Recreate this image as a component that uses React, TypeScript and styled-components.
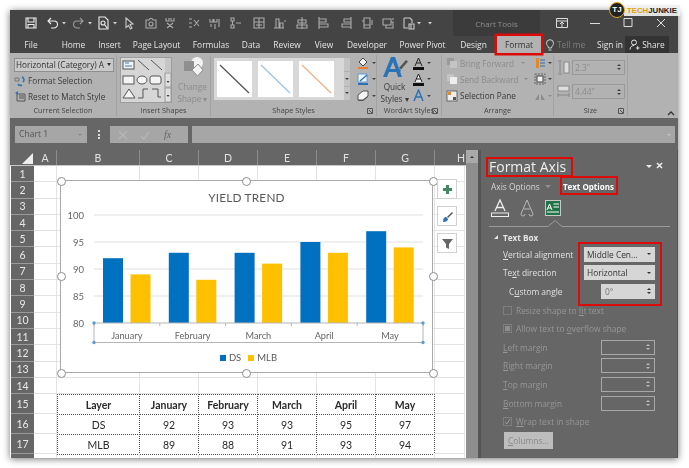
import React from 'react'
import styled, { createGlobalStyle } from 'styled-components'

const Global = createGlobalStyle`
  html, body { margin: 0; padding: 0; background: #fff; }
  body { font-family: "Open Sans", "Liberation Sans", sans-serif; width: 689px; height: 468px; overflow: hidden; }
`

const Page = styled.div`
  position: relative;
  width: 689px;
  height: 468px;
  padding: 10px 11px 10px 10px;
  box-sizing: border-box;
`
const Window = styled.div`
  width: 668px;
  height: 448px;
  display: flex;
  flex-direction: column;
  background: #666;
  box-shadow: 0 1px 7px rgba(0, 0, 0, 0.55);
  filter: blur(0.35px);
  overflow: hidden;
  position: relative;
`

/* title bar */
const TitleBar = styled.div`
  height: 26px;
  display: flex;
  background: #444;
`
const Qat = styled.div`
  flex: 1;
  display: flex;
  align-items: center;
  padding-left: 14px;
`
const QatSlot = styled.span<{ $ml: number; $w?: number }>`
  width: ${p => p.$w ?? 14}px;
  height: 14px;
  margin-left: ${p => p.$ml}px;
  display: block;
  svg { display: block; }
`
const ChartTools = styled.div`
  width: 87px;
  background: #3b3b3b;
  color: #8e8e8e;
  font-size: 8px;
  display: flex;
  align-items: center;
  justify-content: center;
`
const WinControls = styled.div`
  width: 138px;
  display: flex;
  align-items: center;
  padding-left: 15px;
  gap: 19px;
  box-sizing: border-box;
  svg { display: block; }
`

/* tabs */
const TabRow = styled.div`
  height: 17px;
  display: flex;
  align-items: stretch;
  background: #444;
`
const Tab = styled.div<{ $w: number; $active?: boolean }>`
  width: ${p => p.$w}px;
  display: flex;
  align-items: center;
  justify-content: center;
  font-size: 8.4px;
  white-space: nowrap;
  color: ${p => (p.$active ? '#333' : '#e4e4e4')};
  background: ${p => (p.$active ? '#b2b2b2' : 'transparent')};
  margin-left: ${p => (p.$active ? 4 : 0)}px;
  box-shadow: ${p => (p.$active ? '0 0 0 2.5px #dd0a0a' : 'none')};
  position: relative;
  z-index: ${p => (p.$active ? 2 : 0)};
`
const TellMe = styled.div`
  width: 50px;
  margin-left: 4px;
  display: flex;
  align-items: center;
  gap: 2px;
  font-size: 8.4px;
  color: #7d7d7d;
  white-space: nowrap;
  overflow: hidden;
`
const ShareButton = styled.div`
  width: 44px;
  margin: 0 9px 0 auto;
  background: #333;
  color: #e4e4e4;
  font-size: 8.4px;
  display: flex;
  align-items: center;
  justify-content: center;
  gap: 2px;
`

/* ribbon */
const Ribbon = styled.div`
  height: 65px;
  display: flex;
  background: #b2b2b2;
  color: #3a3a3a;
  font-size: 8.2px;
`
const Group = styled.div<{ $w?: number }>`
  ${p => (p.$w ? `width: ${p.$w}px;` : 'flex: 1;')}
  box-sizing: border-box;
  display: flex;
  flex-direction: column;
  position: relative;
  &:not(:last-child) { border-right: 1px solid #a2a2a2; margin: 2px 0; }
`
const GroupBody = styled.div`
  height: 51px;
  display: flex;
`
const GroupLabel = styled.div`
  text-align: center;
  font-size: 7.3px;
  color: #444;
  line-height: 11px;
`
const Launcher = styled.svg`
  position: absolute;
  right: 3px;
  bottom: 2px;
`
const Stack = styled.div<{ $pl?: number; $w?: number }>`
  display: flex;
  flex-direction: column;
  justify-content: space-around;
  padding: 0 0 1px ${p => p.$pl ?? 0}px;
  ${p => (p.$w ? `width: ${p.$w}px; box-sizing: border-box;` : '')}
`
const Combo = styled.div`
  margin-top: 1px;
  width: 100px;
  height: 14px;
  box-sizing: border-box;
  background: #c9c9c9;
  border: 1px solid #8f8f8f;
  font-size: 8.2px;
  line-height: 12px;
  padding-left: 1px;
  white-space: nowrap;
  overflow: hidden;
  position: relative;
  color: #333;
`
const ComboCaret = styled.i`
  position: absolute;
  right: 2px;
  top: 4px;
  border: 2.5px solid transparent;
  border-top: 3px solid #333;
`
const CmdRow = styled.div<{ $off?: boolean }>`
  display: flex;
  align-items: center;
  gap: 2px;
  font-size: 8.2px;
  white-space: nowrap;
  color: ${p => (p.$off ? '#8b8b8b' : '#3a3a3a')};
  svg { display: block; flex: none; }
`
const BigButton = styled.div<{ $off?: boolean; $w: number; $ml?: number }>`
  width: ${p => p.$w}px;
  margin-left: ${p => p.$ml ?? 0}px;
  display: flex;
  flex-direction: column;
  align-items: center;
  font-size: 8.2px;
  line-height: 12px;
  color: ${p => (p.$off ? '#8b8b8b' : '#3a3a3a')};
  svg { display: block; margin-bottom: 2px; }
`
const ShapeGallery = styled.svg`
  margin: 2px 0 0 3px;
  display: block;
`
const StyleGallery = styled.div`
  margin: 3px 0 0 3px;
  width: 131px;
  height: 42px;
  background: #d8d8d8;
  display: flex;
  align-items: center;
  padding-left: 3px;
  gap: 6px;
  box-sizing: border-box;
  position: relative;
`
const Tile = styled.div`
  width: 35px;
  height: 36px;
  background: #fff;
  svg { display: block; }
`
const GalleryScroll = styled.div`
  margin-top: 3px;
  width: 6px;
  height: 42px;
  display: flex;
  flex-direction: column;
  gap: 1px;
`
const ScrollCell = styled.div`
  flex: 1;
  background: #c4c4c4;
  display: flex;
  align-items: center;
  justify-content: center;
`
const Caret = styled.i<{ $c?: string; $ml?: number }>`
  display: block;
  flex: none;
  width: 0;
  height: 0;
  margin-left: ${p => p.$ml ?? 0}px;
  border-left: 2.2px solid transparent;
  border-right: 2.2px solid transparent;
  border-top: 2.6px solid ${p => p.$c ?? '#444'};
`
const SizeInput = styled.div`
  width: 53px;
  height: 15px;
  box-sizing: border-box;
  border: 1px solid #999;
  color: #8b8b8b;
  font-size: 8.4px;
  line-height: 13px;
  padding-left: 2px;
  display: flex;
  align-items: center;
  justify-content: space-between;
  padding-right: 3px;
`
const Spin = styled.div`
  display: flex;
  flex-direction: column;
  gap: 2px;
  align-items: center;
`
const UpCaret = styled.i<{ $c?: string }>`
  display: block;
  width: 0;
  height: 0;
  border-left: 2px solid transparent;
  border-right: 2px solid transparent;
  border-bottom: 2.5px solid ${p => p.$c ?? '#444'};
`
const DownCaret = styled(UpCaret)`
  transform: rotate(180deg);
`

/* formula bar */
const FormulaBar = styled.div`
  height: 32px;
  background: #666;
  display: flex;
  padding: 8px 3px 0 5px;
  box-sizing: border-box;
`
const NameBox = styled.div`
  width: 72px;
  height: 17px;
  background: #a6a6a6;
  color: #555;
  font-size: 8.6px;
  line-height: 17px;
  padding-left: 4px;
  box-sizing: border-box;
  display: flex;
  align-items: center;
  justify-content: space-between;
  padding-right: 5px;
`
const Dots = styled.div`
  width: 23px;
  display: flex;
  flex-direction: column;
  gap: 1.5px;
  align-items: center;
  justify-content: center;
  height: 17px;
  i { width: 2px; height: 2px; background: #ddd; display: block; }
`
const FxButtons = styled.div`
  width: 78px;
  height: 17px;
  background: #a6a6a6;
  display: flex;
  align-items: center;
  padding-left: 8px;
  gap: 12px;
  box-sizing: border-box;
`
const FxText = styled.span`
  font-family: "Liberation Serif", serif;
  font-style: italic;
  font-size: 10px;
  color: #666;
  margin-left: 2px;
`
const FormulaInput = styled.div`
  margin-left: 4px;
  flex: 1;
  height: 17px;
  background: #a6a6a6;
  display: flex;
  align-items: center;
  justify-content: flex-end;
  padding-right: 4px;
`

/* sheet */
const Workspace = styled.div`
  flex: 1;
  display: flex;
  min-height: 0;
  background: #555;
`
const Sheet = styled.div`
  width: 456px;
  display: flex;
  flex-direction: column;
  background: #fff;
`
const ColHeaders = styled.div`
  height: 15px;
  display: flex;
  background: #666;
  border-bottom: 1px solid #c8c8c8;
  box-sizing: content-box;
  font-family: Lato, "Liberation Sans", sans-serif;
  color: #e2e2e2;
  font-size: 10.5px;
  padding-left: 1px;
`
const Corner = styled.div`
  width: 23px;
  position: relative;
  &::after {
    content: "";
    position: absolute;
    right: 1px;
    bottom: 1px;
    border-left: 11px solid transparent;
    border-bottom: 11px solid #eee;
  }
`
const ColHead = styled.div<{ $w: number }>`
  width: ${p => p.$w}px;
  display: flex;
  align-items: center;
  justify-content: center;
  box-sizing: border-box;
  border-right: 1px solid #8c8c8c;
  &:last-child { border-right: none; justify-content: flex-end; overflow: hidden; }
`
const SheetBody = styled.div`
  flex: 1;
  display: flex;
  min-height: 0;
  overflow: hidden;
  padding-left: 1px;
`
const RowHeads = styled.div`
  width: 23px;
  flex: none;
  background: #666;
  color: #e8e8e8;
  font-family: Lato, "Liberation Sans", sans-serif;
  font-size: 10.5px;
`
const RowHead = styled.div<{ $h: number }>`
  height: ${p => p.$h}px;
  box-sizing: border-box;
  border-bottom: 1px solid #9a9a9a;
  display: flex;
  align-items: center;
  justify-content: center;
`
const Cells = styled.div`
  position: relative;
  flex: 1;
`
const CellRow = styled.div<{ $h: number }>`
  height: ${p => p.$h}px;
  display: flex;
`
const Cell = styled.div<{ $w: number; $table?: boolean; $head?: boolean }>`
  width: ${p => p.$w}px;
  flex: none;
  box-sizing: border-box;
  border-right: ${p => (p.$table ? '1px dotted #555' : '1px solid #e3e3e3')};
  border-bottom: ${p => (p.$table ? '1px dotted #555' : '1px solid #e3e3e3')};
  ${p => (p.$table ? 'border-top: 1px dotted #555; margin-bottom: -1px;' : '')}
  display: flex;
  align-items: center;
  justify-content: center;
  font-family: Lato, "Liberation Sans", sans-serif;
  font-size: 10.5px;
  font-weight: ${p => (p.$head ? 700 : 400)};
  color: #2a2a2a;
`
const TableFirst = styled(Cell)`
  border-left: 1px dotted #555;
`

/* chart */
const ChartFrame = styled.div`
  position: absolute;
  left: 26px;
  top: 14px;
  width: 373px;
  height: 193px;
  box-sizing: border-box;
  background: #fff;
  border: 1.3px solid #a9a9a9;
  display: flex;
  flex-direction: column;
  font-family: Lato, "Liberation Sans", sans-serif;
`
const ChartTitle = styled.div`
  height: 17px;
  padding-top: 8px;
  box-sizing: content-box;
  text-align: center;
  font-size: 11.8px;
  line-height: 18px;
  color: #595959;
  letter-spacing: 0.2px;
`
const Plot = styled.svg`
  display: block;
  font-family: Lato, "Liberation Sans", sans-serif;
`
const Legend = styled.div`
  display: flex;
  justify-content: center;
  align-items: center;
  gap: 3px;
  font-size: 9.5px;
  color: #595959;
  margin-top: 4px;
`
const LegendKey = styled.i<{ $c: string }>`
  width: 6px;
  height: 6px;
  background: ${p => p.$c};
  display: block;
  margin-left: 4px;
`
const Handle = styled.i<{ $x: number; $y: number }>`
  position: absolute;
  left: ${p => p.$x}px;
  top: ${p => p.$y}px;
  width: 7px;
  height: 7px;
  margin: -4px 0 0 -4px;
  border-radius: 50%;
  background: #fff;
  border: 1.2px solid #8d8d8d;
`
const SideButtons = styled.div`
  position: absolute;
  left: 403px;
  top: 13px;
  display: flex;
  flex-direction: column;
  gap: 7px;
`
const SideButton = styled.div`
  width: 20px;
  height: 20px;
  box-sizing: border-box;
  background: #fff;
  border: 1px solid #d0d0d0;
  display: flex;
  align-items: center;
  justify-content: center;
  svg { display: block; }
`
const VScroll = styled.div`
  width: 12px;
  background: #8e8e8e;
`
const VScrollUp = styled.div`
  height: 13px;
  background: #a9a9a9;
  display: flex;
  align-items: center;
  justify-content: center;
`

/* format pane */
const Pane = styled.div`
  margin-left: 3px;
  flex: 1;
  background: #666;
  color: #e6e6e6;
  font-size: 8.4px;
  position: relative;
  display: flex;
  flex-direction: column;
  border-right: 1px solid #555;
`
const PaneHead = styled.div`
  display: flex;
  align-items: center;
  padding: 7px 11px 0 8px;
  height: 20px;
`
const PaneTitle = styled.div`
  font-size: 14px;
  line-height: 20px;
  color: #eee;
  flex: 1;
  white-space: nowrap;
`
const PaneTabs = styled.div`
  display: flex;
  align-items: center;
  height: 17px;
  padding-left: 10px;
  margin-top: 1px;
`
const PaneTab = styled.div<{ $on?: boolean }>`
  font-size: ${p => (p.$on ? 8 : 8.4)}px;
  font-weight: ${p => (p.$on ? 700 : 400)};
  color: ${p => (p.$on ? '#fff' : '#d4d4d4')};
  white-space: nowrap;
  margin-left: ${p => (p.$on ? 12 : 0)}px;
`
const PaneCaret = styled.i`
  display: block;
  margin-left: 5px;
  width: 0;
  height: 0;
  border-left: 3px solid transparent;
  border-right: 3px solid transparent;
  border-top: 3px solid #8f8f8f;
`
const PaneIcons = styled.div`
  display: flex;
  align-items: center;
  gap: 11px;
  height: 22px;
  padding: 2px 0 0 10px;
  svg { display: block; }
`
const Notch = styled.svg`
  display: block;
  margin: 1px 0 0 8px;
`
const SectionHead = styled.div`
  display: flex;
  align-items: center;
  gap: 5px;
  height: 16px;
  padding: 2px 0 0 13px;
  font-weight: 700;
  font-size: 8.2px;
`
const Tri = styled.i`
  width: 0;
  height: 0;
  border-left: 4px solid transparent;
  border-bottom: 4px solid #e6e6e6;
  display: block;
`
const FieldRow = styled.div<{ $off?: boolean; $indent?: number }>`
  height: 18.6px;
  display: flex;
  align-items: center;
  padding: 0 22px 0 ${p => p.$indent ?? 22}px;
  color: ${p => (p.$off ? '#979797' : '#e0e0e0')};
  font-size: 8.4px;
  white-space: nowrap;
`
const Select = styled.div`
  margin-left: auto;
  width: 71px;
  height: 15px;
  box-sizing: border-box;
  background: #d6d6d6;
  color: #333;
  font-size: 8.4px;
  padding: 0 4px 0 3px;
  display: flex;
  align-items: center;
  justify-content: space-between;
`
const SpinBox = styled.div<{ $off?: boolean }>`
  margin-left: auto;
  width: 54px;
  height: 15px;
  box-sizing: border-box;
  background: ${p => (p.$off ? 'transparent' : '#d6d6d6')};
  border: ${p => (p.$off ? '1px solid #a8a8a8' : 'none')};
  color: #777;
  font-size: 8.4px;
  padding: 0 4px;
  display: flex;
  align-items: center;
  justify-content: space-between;
`
const Check = styled.i<{ $dot?: boolean }>`
  width: 9px;
  height: 9px;
  margin-right: 4px;
  box-sizing: border-box;
  border: 1px solid #7e7e7e;
  background: #666;
  display: flex;
  align-items: center;
  justify-content: center;
  flex: none;
  &::after {
    content: "";
    display: ${p => (p.$dot ? 'block' : 'none')};
    width: 5px;
    height: 5px;
    background: #8f8f8f;
  }
  svg { display: block; }
`
const ColumnsButton = styled.div`
  margin: 1px 0 0 23px;
  width: 49px;
  height: 17px;
  background: #bdbdbd;
  color: #8a8a8a;
  font-size: 8.4px;
  line-height: 17px;
  text-align: center;
`
const RedBox = styled.div<{ $x: number; $y: number; $w: number; $h: number }>`
  position: absolute;
  left: ${p => p.$x}px;
  top: ${p => p.$y}px;
  width: ${p => p.$w}px;
  height: ${p => p.$h}px;
  box-sizing: border-box;
  border: 2.5px solid #dd0a0a;
  pointer-events: none;
`

/* logo */
const Logo = styled.div`
  position: absolute;
  left: 609px;
  top: 2px;
  display: flex;
  align-items: center;
`
const LogoMark = styled.div`
  width: 16px;
  height: 16px;
  border-radius: 50%;
  background: #222;
  border: 1.5px solid #e8a912;
  box-sizing: border-box;
  color: #fff;
  font-family: "Liberation Sans", sans-serif;
  font-size: 8px;
  font-weight: 700;
  line-height: 13px;
  text-align: center;
  position: relative;
  z-index: 1;
`
const LogoText = styled.div`
  margin-left: -1px;
  height: 11px;
  padding: 0 3px 0 3px;
  background: rgba(240, 240, 240, 0.92);
  font-family: "Liberation Sans", sans-serif;
  font-size: 7.8px;
  font-weight: 700;
  line-height: 11px;
  color: #222;
  span { color: #e0a010; }
`

const qatIcons: { ml: number; w?: number; d?: string; c?: string }[] = [
  { ml: 0, d: 'M2 2h10v10H2zM4 2v4h6V2M4 12V8.5h6V12', c: '#eee' },
  { ml: 8, d: 'M5 2L2 5l3 3M2 5h6a3.5 3.5 0 0 1 0 7H5', c: '#eee' },
  { ml: 0, w: 8 },
  { ml: 3, d: 'M9 2l3 3-3 3M12 5H6a3.5 3.5 0 0 0 0 7h3', c: '#9a9a9a' },
  { ml: 1, w: 8 },
  { ml: 2, d: 'M3 1h6l3 3v9H3zM5 7a2 2 0 1 0 4 0 2 2 0 0 0-4 0M9 9l2 3', c: '#eee' },
  { ml: 1, w: 8 },
  { ml: 3, d: 'M4 2l7 6-3 .5 2 3.5-1.5 1-2-3.5L4 11.5z', c: '#c8c8c8' },
  { ml: 8, d: 'M2 4h3l1-1.5h2L9 4h3v8H2zM5 8a2 2 0 1 0 4 0 2 2 0 0 0-4 0', c: '#aaa' },
  { ml: 5, d: 'M3 2v3h3V2M8 2v3h3V2M4 7l6 5M10 7l-6 5', c: '#aaa' },
  { ml: 10, d: 'M2 3h3M2 7h3M2 11h3M7 4l5 6M12 4l-5 6', c: '#aaa' },
  { ml: 7, d: 'M2 3v3h3V3M6 3v3h3V3M7 8v5M3 8v3M11 3v8', c: '#aaa' },
  { ml: 6, d: 'M3 2h3v3H3zM3 9h3v3H3zM8 7h5M4.5 5v4', c: '#aaa' },
  { ml: 10, d: 'M2 2h10v10H2zM2 6h10M7 2v10M4 9h6', c: '#aaa' },
  { ml: 6, d: 'M2 12h10M4 3h3v9H4zM8 7h3v5H8zM12 5h2', c: '#aaa' },
  { ml: 9, d: 'M7 1v12M3 4h8v3H3zM2 9h10v3H2z', c: '#aaa' },
  { ml: 7, d: 'M3 1v12M3 3h7v3H3zM3 8h9v3H3z', c: '#aaa' },
  { ml: 10, d: 'M11 1v12M4 3h7v3H4zM2 8h9v3H2z', c: '#aaa' },
  { ml: 6, d: 'M4 2h6v7H4zM2 5h2v7h6v-3M12 4v5', c: '#aaa' },
  { ml: 7, d: 'M2 3h8v6H2zM5 9v3h7V6h-2M12 2v2', c: '#aaa' },
  { ml: 6, d: 'M3 2h6l2 2v3M3 2v10h4M8 8h5v5H8zM10 8v5', c: '#c8c8c8' },
  { ml: 0, w: 8 },
  { ml: 3, w: 8 },
]

const tabs: [string, number][] = [
  ['File', 42], ['Home', 43], ['Insert', 29], ['Page Layout', 65], ['Formulas', 44], ['Data', 36],
  ['Review', 36], ['View', 38], ['Developer', 48], ['Power Pivot', 63], ['Design', 39],
]

const colWidths = [23, 83, 59, 59, 59, 59, 59, 30]
const colNames = ['A', 'B', 'C', 'D', 'E', 'F', 'G', 'H']
const rowHeights = [...Array(14).fill(16.3), 20, 20, 20, 8] as number[]

const tableRows = [
  ['Layer', 'January', 'February', 'March', 'April', 'May'],
  ['DS', '92', '93', '93', '95', '97'],
  ['MLB', '89', '88', '91', '93', '94'],
]

const chartData = [
  { month: 'January', ds: 92, mlb: 89 },
  { month: 'February', ds: 93, mlb: 88 },
  { month: 'March', ds: 93, mlb: 91 },
  { month: 'April', ds: 95, mlb: 93 },
  { month: 'May', ds: 97, mlb: 94 },
]

const BLUE = '#0070c0'
const GOLD = '#ffc000'

const Arrows = ({ c }: { c?: string }) => (
  <Spin>
    <UpCaret $c={c} />
    <DownCaret $c={c} />
  </Spin>
)

const Chart = () => {
  const y = (v: number) => 117 - (v - 80) * 5.4
  return (
    <Plot width="371" height="142" viewBox="0 0 371 142">
      {[100, 95, 90, 85].map(v => (
        <line key={v} x1="33" x2="362" y1={y(v)} y2={y(v)} stroke="#e2e2e2" strokeWidth="1.2" />
      ))}
      {[100, 95, 90, 85, 80].map(v => (
        <text key={v} x="23" y={y(v) + 3.5} textAnchor="end" fontSize="9.5" fill="#666">{v}</text>
      ))}
      {chartData.map((d, i) => (
        <g key={d.month}>
          <rect x={42 + i * 65.8} y={y(d.ds)} width="20" height={117 - y(d.ds)} fill={BLUE} />
          <rect x={69.5 + i * 65.8} y={y(d.mlb)} width="20" height={117 - y(d.mlb)} fill={GOLD} />
          <text x={65.8 + i * 65.8} y="133" textAnchor="middle" fontSize="9.2" fill="#666">{d.month}</text>
        </g>
      ))}
      <rect x="33" y="117" width="329" height="19.5" fill="none" stroke="#b5b5b5" strokeWidth="1" />
      {[0, 1, 2, 3, 4, 5].map(i => (
        <line key={i} x1={33 + i * 65.8} x2={33 + i * 65.8} y1="117" y2="120" stroke="#b5b5b5" />
      ))}
      {[[33, 117], [362, 117], [33, 136.5], [362, 136.5]].map(([cx, cy]) => (
        <circle key={`${cx}-${cy}`} cx={cx} cy={cy} r="1.7" fill="#5b9bd5" />
      ))}
    </Plot>
  )
}

const LineTile = ({ c }: { c: string }) => (
  <Tile>
    <svg width="35" height="36">
      <line x1="3" y1="4" x2="32" y2="32" stroke={c} strokeWidth="1.3" />
    </svg>
  </Tile>
)

const App = () => {
  return (
    <Page>
      <Global />
      <Window>
        <TitleBar>
          <Qat>
            {qatIcons.map((q, i) => (
              <QatSlot key={i} $ml={q.ml} $w={q.w}>
                {q.d ? (
                  <svg width="14" height="14" viewBox="0 0 14 14" fill="none" stroke={q.c} strokeWidth="1.1">
                    <path d={q.d} />
                  </svg>
                ) : (
                  <svg width="8" height="14" viewBox="0 0 8 14">
                    <path d="M2 6h4L4 8.5z" fill="#ccc" />
                  </svg>
                )}
              </QatSlot>
            ))}
          </Qat>
          <ChartTools>Chart Tools</ChartTools>
          <WinControls>
            <svg width="14" height="12" viewBox="0 0 14 12" fill="none" stroke="#ddd">
              <path d="M1.5 1.5h11v9h-11zM1.5 4h11M7 10V5M5 7l2-2 2 2" />
            </svg>
            <svg width="14" height="12" viewBox="0 0 14 12" stroke="#ddd">
              <path d="M2 6.5h10" />
            </svg>
            <svg width="14" height="12" viewBox="0 0 14 12" fill="none" stroke="#ddd">
              <path d="M3 1.5h8v8H3z" />
            </svg>
            <svg width="14" height="12" viewBox="0 0 14 12" fill="none" stroke="#ddd">
              <path d="M3 2l8 8M11 2l-8 8" />
            </svg>
          </WinControls>
        </TitleBar>

        <TabRow>
          {tabs.map(([name, w]) => (
            <Tab key={name} $w={w}>{name}</Tab>
          ))}
          <Tab $w={44} $active>Format</Tab>
          <TellMe>
            <svg width="10" height="12" viewBox="0 0 10 12" fill="none" stroke="#d0d0d0">
              <path d="M3.5 9C3.5 7 1.5 6.5 1.5 4.2a3.5 3.5 0 0 1 7 0C8.5 6.5 6.500 7 6.500 9zM3.5 11h3" />
            </svg>
            Tell me
          </TellMe>
          <Tab $w={30}>Sign in</Tab>
          <ShareButton>
            <svg width="11" height="11" viewBox="0 0 11 11" fill="none" stroke="#e4e4e4">
              <path d="M5 6a2.5 2.5 0 1 0 0-5 2.5 2.5 0 0 0 0 5zM1 10.5C1 8 3 6.5 5 6.5M7 9h3.5M8.7 7.2v3.5" />
            </svg>
            Share
          </ShareButton>
        </TabRow>

        <Ribbon>
          <Group $w={107}>
            <GroupBody>
              <Stack $pl={4}>
                <Combo>
                  Horizontal (Category) A
                  <ComboCaret />
                </Combo>
                <CmdRow>
                  <svg width="12" height="12" viewBox="0 0 12 12" fill="none">
                    <path d="M1 3h4v3H1z" stroke="#777" />
                    <path d="M8 2a3 3 0 0 1 1 5M4 9a3 3 0 0 0 4 1" stroke="#2a73b8" strokeWidth="1.5" />
                  </svg>
                  Format Selection
                </CmdRow>
                <CmdRow>
                  <svg width="12" height="12" viewBox="0 0 12 12" fill="none">
                    <path d="M3 4h8v7H3zM5 6h5M5 8h5" stroke="#555" />
                    <path d="M1 3l3-2v4z" fill="#2a73b8" />
                  </svg>
                  Reset to Match Style
                </CmdRow>
              </Stack>
            </GroupBody>
            <GroupLabel>Current Selection</GroupLabel>
          </Group>

          <Group $w={94}>
            <GroupBody>
              <ShapeGallery width="52" height="46" viewBox="0 0 52 46" fill="none" stroke="#555">
                <rect x=".5" y=".5" width="51" height="45" fill="#d6d6d6" stroke="#9d9d9d" />
                <rect x="45" y="1" width="6" height="14" fill="#c6c6c6" stroke="none" />
                <rect x="45" y="16" width="6" height="14" fill="#dfdfdf" stroke="#9a9a9a" />
                <rect x="45" y="31" width="6" height="14" fill="#dfdfdf" stroke="#9a9a9a" />
                <path d="M46.5 24l1.5 2 1.5-2zM46.5 38l1.5 2 1.5-2z" fill="#444" stroke="none" />
                <rect x="3" y="4" width="11" height="8" fill="#f4f4f4" />
                <path d="M5 6h4M5 9h7" stroke="#3f78b4" />
                <path d="M18 3l11 10M31 3l11 10" />
                <rect x="3" y="19" width="11" height="8" rx="0" fill="#f4f4f4" />
                <ellipse cx="22" cy="23" rx="5" ry="4" fill="#f4f4f4" />
                <rect x="30" y="19" width="11" height="8" rx="2" fill="#f4f4f4" />
                <path d="M3 41l6-9 6 9z" fill="#f4f4f4" />
                <path d="M18 41h5V32h5M32 32h6v8h3" />
              </ShapeGallery>
              <BigButton $off $w={35} $ml={3}>
                <svg width="24" height="24" viewBox="0 0 24 24">
                  <circle cx="16" cy="8" r="6" fill="#f2f2f2" />
                  <path d="M3 6h10v10H3z" fill="#8f8f8f" />
                  <path d="M11 15l6-6 5 6-5.5 6z" fill="#f2f2f2" stroke="#8f8f8f" />
                </svg>
                <span>Change</span>
                <span>Shape ▾</span>
              </BigButton>
            </GroupBody>
            <GroupLabel>Insert Shapes</GroupLabel>
          </Group>

          <Group $w={166}>
            <GroupBody>
              <StyleGallery>
                <LineTile c="#555" />
                <LineTile c="#9dc3e6" />
                <LineTile c="#f4b183" />
              </StyleGallery>
              <GalleryScroll>
                <ScrollCell />
                <ScrollCell><Caret /></ScrollCell>
                <ScrollCell><Caret /></ScrollCell>
              </GalleryScroll>
              <Stack $pl={6}>
                <CmdRow>
                  <svg width="14" height="12" viewBox="0 0 14 12">
                    <path d="M7 1l4 4-4 4-4-4z" fill="#f4f4f4" stroke="#444" />
                    <rect x="2" y="10" width="10" height="2" fill="#ed7d31" />
                  </svg>
                  <Caret />
                </CmdRow>
                <CmdRow>
                  <svg width="14" height="12" viewBox="0 0 14 12">
                    <path d="M2 1h9v8H2z" fill="#f4f4f4" stroke="#5b9bd5" />
                    <path d="M4 8l7-6" stroke="#2a73b8" strokeWidth="1.4" />
                    <rect x="2" y="10" width="10" height="2" fill="#2a73b8" />
                  </svg>
                  <Caret />
                </CmdRow>
                <CmdRow>
                  <svg width="14" height="12" viewBox="0 0 14 12">
                    <path d="M2 6l5-4h5v5l-5 4H2z" fill="#555" />
                    <path d="M2 5l5-4h5v5l-5 4H2z" fill="#f4f4f4" stroke="#555" />
                  </svg>
                  <Caret />
                </CmdRow>
              </Stack>
            </GroupBody>
            <GroupLabel>Shape Styles</GroupLabel>
            <Launcher width="6" height="6" viewBox="0 0 6 6" fill="none" stroke="#555">
              <path d="M.5.5h5v5h-5zM2 2l3 3" />
            </Launcher>
          </Group>

          <Group $w={65}>
            <GroupBody>
              <BigButton $w={35}>
                <svg width="28" height="24" viewBox="0 0 28 24">
                  <path d="M2 22L10 2h4l7 20h-4l-1.5-5H8l-2 5zM9 14h5.5l-2.5-7z" fill="#2a73b8" />
                  <path d="M18 13l7-8 2 1.5-7 8z" fill="#555" />
                  <path d="M15 17l3-3 2 1.5-2 3z" fill="#2a73b8" />
                </svg>
                <span>Quick</span>
                <span>Styles ▾</span>
              </BigButton>
              <Stack>
                <CmdRow>
                  <svg width="13" height="13" viewBox="0 0 13 13">
                    <path d="M3 9l3.5-8 3.5 8M4.5 6h4" stroke="#222" fill="none" />
                    <rect x="1" y="10" width="11" height="3" fill="#111" />
                  </svg>
                  <Caret />
                </CmdRow>
                <CmdRow>
                  <svg width="13" height="13" viewBox="0 0 13 13">
                    <path d="M3 9l3.5-8 3.5 8M4.5 6h4" stroke="#222" fill="#eee" />
                    <rect x="1" y="10" width="11" height="3" fill="#111" />
                  </svg>
                  <Caret />
                </CmdRow>
                <CmdRow>
                  <svg width="13" height="13" viewBox="0 0 13 13">
                    <path d="M2 12L6.5 1 11 12M4 8h5" stroke="#2a73b8" strokeWidth="1.5" fill="none" />
                  </svg>
                  <Caret />
                </CmdRow>
              </Stack>
            </GroupBody>
            <GroupLabel>WordArt Styles</GroupLabel>
            <Launcher width="6" height="6" viewBox="0 0 6 6" fill="none" stroke="#555">
              <path d="M.5.5h5v5h-5zM2 2l3 3" />
            </Launcher>
          </Group>

          <Group $w={112}>
            <GroupBody>
              <Stack $pl={4} $w={90}>
                <CmdRow $off>
                  <svg width="12" height="12" viewBox="0 0 12 12">
                    <rect x="1" y="1" width="7" height="7" fill="#9a9a9a" />
                    <rect x="4" y="4" width="7" height="7" fill="#c4c4c4" />
                  </svg>
                  Bring Forward
                  <Caret $c="#8b8b8b" $ml={5} />
                </CmdRow>
                <CmdRow $off>
                  <svg width="12" height="12" viewBox="0 0 12 12">
                    <rect x="1" y="1" width="7" height="7" fill="#c4c4c4" />
                    <rect x="4" y="4" width="7" height="7" fill="#eee" />
                  </svg>
                  Send Backward
                  <Caret $c="#8b8b8b" $ml={3} />
                </CmdRow>
                <CmdRow>
                  <svg width="12" height="12" viewBox="0 0 12 12">
                    <rect x="1" y="1" width="10" height="10" fill="#eee" stroke="#666" />
                    <rect x="2" y="2" width="3" height="3" fill="#e08a2c" />
                    <rect x="7" y="7" width="3" height="3" fill="#555" />
                  </svg>
                  Selection Pane
                </CmdRow>
              </Stack>
              <Stack $pl={2}>
                <CmdRow>
                  <svg width="12" height="12" viewBox="0 0 12 12">
                    <path d="M2 1h3v10H2z" fill="#e08a2c" />
                    <path d="M6 3h5M6 6h5M6 9h5" stroke="#2a73b8" />
                  </svg>
                  <Caret />
                </CmdRow>
                <CmdRow>
                  <svg width="12" height="12" viewBox="0 0 12 12" fill="none">
                    <rect x="1" y="1" width="10" height="10" stroke="#666" strokeDasharray="2 1" />
                    <rect x="3" y="3" width="6" height="6" fill="#f0f0f0" stroke="#444" />
                  </svg>
                  <Caret />
                </CmdRow>
                <CmdRow $off>
                  <svg width="12" height="12" viewBox="0 0 12 12">
                    <path d="M1 10l4-6v6zM7 4l4 6H7z" fill="#8b8b8b" />
                  </svg>
                  <Caret $c="#8b8b8b" />
                </CmdRow>
              </Stack>
            </GroupBody>
            <GroupLabel>Arrange</GroupLabel>
          </Group>

          <Group $w={74}>
            <GroupBody>
              <Stack $pl={3}>
                <CmdRow>
                  <svg width="13" height="15" viewBox="0 0 13 15" fill="none" stroke="#888">
                    <path d="M1 1h4M1 14h4M3 2v11" />
                    <rect x="7" y="2" width="5" height="11" fill="#ddd" />
                  </svg>
                  <SizeInput>2.3"<Arrows /></SizeInput>
                </CmdRow>
                <CmdRow>
                  <svg width="13" height="15" viewBox="0 0 13 15" fill="none" stroke="#888">
                    <rect x="1" y="2" width="11" height="5" fill="#ddd" />
                    <path d="M1 9v4M12 9v4M1 11h11" />
                  </svg>
                  <SizeInput>4.44"<Arrows /></SizeInput>
                </CmdRow>
              </Stack>
            </GroupBody>
            <GroupLabel>Size</GroupLabel>
            <Launcher width="6" height="6" viewBox="0 0 6 6" fill="none" stroke="#555">
              <path d="M.5.5h5v5h-5zM2 2l3 3" />
            </Launcher>
          </Group>

          <Group>
            <Launcher width="8" height="6" viewBox="0 0 8 6" fill="none" stroke="#333" strokeWidth="1.3">
              <path d="M1 5l3-3 3 3" />
            </Launcher>
          </Group>
        </Ribbon>

        <FormulaBar>
          <NameBox>
            Chart 1
            <Caret $c="#888" />
          </NameBox>
          <Dots><i /><i /><i /></Dots>
          <FxButtons>
            <svg width="10" height="10" viewBox="0 0 10 10" stroke="#b8b8b8" strokeWidth="1.2"><path d="M1 1l8 8M9 1l-8 8" /></svg>
            <svg width="10" height="10" viewBox="0 0 10 10" fill="none" stroke="#b8b8b8" strokeWidth="1.2"><path d="M1 6l3 3 5-7" /></svg>
            <FxText>fx</FxText>
          </FxButtons>
          <FormulaInput><Caret $c="#c4c4c4" /></FormulaInput>
        </FormulaBar>

        <Workspace>
          <Sheet>
            <ColHeaders>
              <Corner />
              {colNames.map((n, i) => (
                <ColHead key={n} $w={colWidths[i]}>{n}</ColHead>
              ))}
            </ColHeaders>
            <SheetBody>
              <RowHeads>
                {rowHeights.map((h, i) => (
                  <RowHead key={i} $h={h}>{i < 17 ? i + 1 : ''}</RowHead>
                ))}
              </RowHeads>
              <Cells>
                {rowHeights.map((h, r) => {
                  const row = tableRows[r - 14]
                  return (
                    <CellRow key={r} $h={h}>
                      {colWidths.map((w, c) => {
                        if (row && c >= 1 && c <= 6) {
                          const Kind = c === 1 ? TableFirst : Cell
                          return (
                            <Kind key={c} $w={w} $table $head={r === 14}>{row[c - 1]}</Kind>
                          )
                        }
                        return <Cell key={c} $w={w} />
                      })}
                    </CellRow>
                  )
                })}
                <ChartFrame>
                  <ChartTitle>YIELD TREND</ChartTitle>
                  <Chart />
                  <Legend>
                    <LegendKey $c={BLUE} /> DS
                    <LegendKey $c={GOLD} /> MLB
                  </Legend>
                </ChartFrame>
                <Handle $x={27} $y={15} />
                <Handle $x={212} $y={15} />
                <Handle $x={399} $y={15} />
                <Handle $x={27} $y={110} />
                <Handle $x={399} $y={110} />
                <Handle $x={27} $y={207} />
                <Handle $x={212} $y={207} />
                <Handle $x={399} $y={207} />
                <SideButtons>
                  <SideButton>
                    <svg width="11" height="11" viewBox="0 0 11 11"><path d="M4 1h3v3h3v3H7v3H4V7H1V4h3z" fill="#3d8a63" /></svg>
                  </SideButton>
                  <SideButton>
                    <svg width="13" height="13" viewBox="0 0 13 13">
                      <path d="M6 7l5-5 1 1-5 5z" fill="#555" />
                      <path d="M2 12c0-3 1-5 3-5l2 2c0 2-2 3-5 3z" fill="#2a73b8" />
                    </svg>
                  </SideButton>
                  <SideButton>
                    <svg width="13" height="13" viewBox="0 0 13 13"><path d="M1 2h11L8 7v5L5 10.5V7z" fill="#666" /></svg>
                  </SideButton>
                </SideButtons>
              </Cells>
            </SheetBody>
          </Sheet>
          <VScroll>
            <VScrollUp><UpCaret $c="#333" /></VScrollUp>
          </VScroll>
          <Pane>
            <PaneHead>
              <PaneTitle>Format Axis</PaneTitle>
              <svg width="20" height="10" viewBox="0 0 20 10">
                <path d="M0 3h6L3 6z" fill="#eee" />
                <path d="M11 1l5 5M16 1l-5 5" stroke="#eee" strokeWidth="1.5" />
              </svg>
            </PaneHead>
            <PaneTabs>
              <PaneTab>Axis Options</PaneTab>
              <PaneCaret />
              <PaneTab $on>Text Options</PaneTab>
            </PaneTabs>
            <PaneIcons>
              <svg width="18" height="18" viewBox="0 0 18 18" fill="none" stroke="#eee">
                <path d="M4 12L9 1l5 11M6 8.5h6" strokeWidth="1.3" />
                <rect x=".5" y="14" width="17" height="3.5" />
              </svg>
              <svg width="14" height="18" viewBox="0 0 14 18" fill="none" stroke="#b8b8b8">
                <path d="M1 15L7 1l6 14M4 10h6M1 15a2 2 0 0 0 4 0M9 15a2 2 0 0 0 4 0" />
              </svg>
              <svg width="16" height="16" viewBox="0 0 16 16">
                <rect x=".5" y=".5" width="15" height="15" fill="#207346" stroke="#c8c8c8" />
                <path d="M2 10l2.5-6L7 10M3 8h3" stroke="#fff" fill="none" />
                <path d="M8.5 4H14M8.5 7H14M2 12H14" stroke="#fff" />
              </svg>
            </PaneIcons>
            <Notch width="181" height="7" viewBox="0 0 181 7" fill="none" stroke="#9a9a9a">
              <path d="M0 6.5h59l7-6 7 6h108" />
            </Notch>
            <SectionHead><Tri />Text Box</SectionHead>
            <FieldRow>
              <span><u>V</u>ertical alignment</span>
              <Select>Middle Cen...<Caret $c="#333" /></Select>
            </FieldRow>
            <FieldRow>
              <span>Te<u>x</u>t direction</span>
              <Select>Horizontal<Caret $c="#333" /></Select>
            </FieldRow>
            <FieldRow $indent={28}>
              <span>C<u>u</u>stom angle</span>
              <SpinBox>0°<Arrows c="#333" /></SpinBox>
            </FieldRow>
            <FieldRow $off><Check /><span>Resize shape to <u>f</u>it text</span></FieldRow>
            <FieldRow $off><Check $dot /><span>Allow text to <u>o</u>verflow shape</span></FieldRow>
            <FieldRow $off><span><u>L</u>eft margin</span><SpinBox $off><i /><Arrows c="#bbb" /></SpinBox></FieldRow>
            <FieldRow $off><span><u>R</u>ight margin</span><SpinBox $off><i /><Arrows c="#bbb" /></SpinBox></FieldRow>
            <FieldRow $off><span><u>T</u>op margin</span><SpinBox $off><i /><Arrows c="#bbb" /></SpinBox></FieldRow>
            <FieldRow $off><span><u>B</u>ottom margin</span><SpinBox $off><i /><Arrows c="#bbb" /></SpinBox></FieldRow>
            <FieldRow $off>
              <Check>
                <svg width="7" height="7" viewBox="0 0 7 7" fill="none" stroke="#999"><path d="M1 4l2 2 3-5" /></svg>
              </Check>
              <span><u>W</u>rap text in shape</span>
            </FieldRow>
            <ColumnsButton><u>C</u>olumns...</ColumnsButton>
            <RedBox $x={5} $y={7} $w={87} $h={20} />
            <RedBox $x={79} $y={26} $w={58} $h={19} />
            <RedBox $x={97} $y={92} $w={84} $h={64} />
          </Pane>
        </Workspace>
      </Window>
      <Logo>
        <LogoMark>TJ</LogoMark>
        <LogoText><span>TECH</span>JUNKIE</LogoText>
      </Logo>
    </Page>
  )
}

export default App
